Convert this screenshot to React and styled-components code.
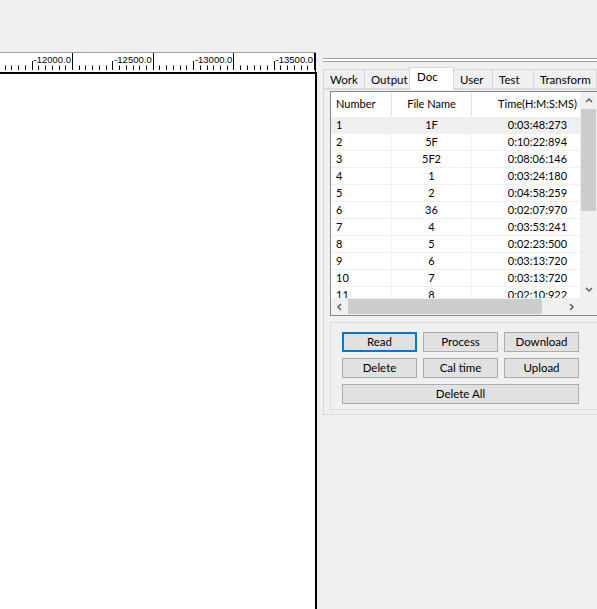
import styled, { createGlobalStyle } from 'styled-components';

const GlobalStyles = createGlobalStyle`
  html, body { margin: 0; padding: 0; }
  body {
    background: #f0f0f0;
    font-family: Lato, "Liberation Sans", sans-serif;
    font-size: 11px;
    color: #000;
  }
`;

const rows = [
  ['1', '1F', '0:03:48:273'],
  ['2', '5F', '0:10:22:894'],
  ['3', '5F2', '0:08:06:146'],
  ['4', '1', '0:03:24:180'],
  ['5', '2', '0:04:58:259'],
  ['6', '36', '0:02:07:970'],
  ['7', '4', '0:03:53:241'],
  ['8', '5', '0:02:23:500'],
  ['9', '6', '0:03:13:720'],
  ['10', '7', '0:03:13:720'],
  ['11', '8', '0:02:10:922'],
];

const tabs = ['Work', 'Output', 'Doc', 'User', 'Test', 'Transform'];
const tabWidths = [42, 46, 45, 40, 42, 64];

function Ruler() {
  const major = [72, 152.7, 233.4, 314.1];
  const labels = ['-12000.0', '-12500.0', '-13000.0', '-13500.0'];
  const step = 80.7 / 12;
  const ticks = [];
  for (let i = -12; i <= 40; i++) {
    const x = Math.round(72 + i * step) + 0.5;
    if (x < 0 || x > 315) continue;
    const m = ((i % 12) + 12) % 12;
    const y1 = m === 0 ? 0 : m === 6 ? 8 : 12.5;
    ticks.push(<line key={i} x1={x} x2={x} y1={y1} y2={17} stroke="#000" strokeWidth="1" />);
  }
  return (
    <RulerSvg width="315" height="19" viewBox="0 0 315 19">
      <rect width="315" height="19" fill="#fff" />
      {ticks}
      {major.map((x, k) => (
        <text key={k} x={x - 1} y="9.5" textAnchor="end" fontSize="9.5" fontFamily="Liberation Sans, sans-serif" fill="#000">
          {labels[k]}
        </text>
      ))}
    </RulerSvg>
  );
}

function Chevron({ dir }) {
  const d = {
    up: 'M1 5 L4 2 L7 5',
    down: 'M1 2 L4 5 L7 2',
    left: 'M5 1 L2 4 L5 7',
    right: 'M2 1 L5 4 L2 7',
  }[dir];
  return (
    <svg width="8" height="8" viewBox="0 0 8 8">
      <path d={d} fill="none" stroke="#606060" strokeWidth="1.5" />
    </svg>
  );
}

function App() {
  return (
    <Page>
      <GlobalStyles />
      <Workspace>
        <TopGap />
        <Ruler />
        <Canvas />
      </Workspace>
      <Side>
        <Grip />
        <TabBar>
          {tabs.map((t, i) => (
            <Tab key={t} $active={t === 'Doc'} $w={tabWidths[i]}>{t}</Tab>
          ))}
        </TabBar>
        <Pane>
          <ListView>
            <ListBody>
              <Table>
                <HeaderRow>
                  <HeadCell $align="left">Number</HeadCell>
                  <HeadCell>File Name</HeadCell>
                  <HeadCell>Time(H:M:S:MS)</HeadCell>
                </HeaderRow>
                {rows.map((r, i) => (
                  <Row key={r[0]} $hl={i === 0}>
                    <Cell $align="left">{r[0]}</Cell>
                    <Cell>{r[1]}</Cell>
                    <Cell>{r[2]}</Cell>
                  </Row>
                ))}
              </Table>
            </ListBody>
            <VScroll>
              <Arrow><Chevron dir="up" /></Arrow>
              <VTrack><VThumb /></VTrack>
              <Arrow><Chevron dir="down" /></Arrow>
            </VScroll>
            <HScroll>
              <Arrow><Chevron dir="left" /></Arrow>
              <HTrack><HThumb /></HTrack>
              <Arrow><Chevron dir="right" /></Arrow>
            </HScroll>
            <Corner />
          </ListView>
          <Group>
            <Button $focus>Read</Button>
            <Button>Process</Button>
            <Button>Download</Button>
            <Button>Delete</Button>
            <Button>Cal time</Button>
            <Button>Upload</Button>
            <Button $span>Delete All</Button>
          </Group>
        </Pane>
      </Side>
    </Page>
  );
}

const Page = styled.div`
  display: flex;
  height: 100vh;
  overflow: hidden;
`;

const Workspace = styled.div`
  width: 316px;
  flex-shrink: 0;
  display: flex;
  flex-direction: column;
`;

const TopGap = styled.div`
  height: 52px;
  border-bottom: 1px solid #a0a0a0;
`;

const RulerSvg = styled.svg`
  display: block;
  border-right: 1px solid #000;
`;

const Canvas = styled.div`
  flex: 1;
  background: #fff;
  border-top: 2px solid #000;
  border-right: 2px solid #000;
  margin-right: -1px;
`;

const Side = styled.div`
  flex: 1;
  padding: 0 0 0 7px;
  display: flex;
  flex-direction: column;
`;

const Grip = styled.div`
  margin-top: 58px;
  height: 2px;
  border-top: 1px solid #a0a0a0;
  border-bottom: 1px solid #a0a0a0;
  background: #fff;
`;

const TabBar = styled.div`
  display: flex;
  align-items: flex-end;
  height: 22px;
  margin-top: 5px;
  position: relative;
  z-index: 1;
`;

const Tab = styled.div`
  width: ${p => p.$w}px;
  flex-shrink: 0;
  box-sizing: border-box;
  height: ${p => (p.$active ? 23 : 20)}px;
  padding: ${p => (p.$active ? '2px 0 0 7px' : '3px 0 0 6px')};
  margin-bottom: ${p => (p.$active ? -1 : 0)}px;
  border: 1px solid #d9d9d9;
  border-bottom: ${p => (p.$active ? 'none' : '1px solid #d9d9d9')};
  background: ${p => (p.$active ? '#fff' : '#f0f0f0')};
  margin-left: -1px;
  &:first-child { margin-left: 0; }
  white-space: nowrap;
  font-size: 11.5px;
`;

const Pane = styled.div`
  height: 326px;
  box-sizing: border-box;
  border: 1px solid #d9d9d9;
  border-right: none;
  padding: 1px 0 0 6px;
  display: flex;
  flex-direction: column;
  gap: 6px;
`;

const ListView = styled.div`
  height: 225px;
  box-sizing: border-box;
  border: 1px solid #828790;
  border-right: none;
  background: #fff;
  display: grid;
  grid-template-columns: 1fr 17px;
  grid-template-rows: 1fr 17px;
`;

const ListBody = styled.div`
  overflow: hidden;
`;

const Table = styled.div`
  width: 272px;
`;

const HeaderRow = styled.div`
  display: grid;
  grid-template-columns: 60px 80px 132px;
  height: 25px;
  align-items: center;
  & > div + div { border-left: 1px solid #e5e5e5; }
`;

const HeadCell = styled.div`
  text-align: ${p => p.$align || 'center'};
  padding-left: ${p => (p.$align === 'left' ? '5px' : '0')};
  height: 100%;
  line-height: 24px;
`;

const Row = styled.div`
  display: grid;
  grid-template-columns: 60px 80px 132px;
  height: 17px;
  line-height: 16px;
  box-sizing: border-box;
  border-bottom: 1px solid #f0f0f0;
  background: ${p => (p.$hl ? '#efefef' : 'transparent')};
  & > div + div { border-left: 1px solid #f0f0f0; }
`;

const Cell = styled.div`
  text-align: ${p => p.$align || 'center'};
  padding-left: ${p => (p.$align === 'left' ? '5px' : '0')};
`;

const VScroll = styled.div`
  background: #f0f0f0;
  display: flex;
  flex-direction: column;
`;

const HScroll = styled.div`
  background: #f0f0f0;
  display: flex;
`;

const Arrow = styled.div`
  width: 17px;
  height: 17px;
  flex-shrink: 0;
  display: flex;
  align-items: center;
  justify-content: center;
`;

const VTrack = styled.div`
  flex: 1;
  padding: 0 1px;
`;

const VThumb = styled.div`
  height: 102px;
  background: #cdcdcd;
`;

const HTrack = styled.div`
  flex: 1;
  padding: 1px 0;
`;

const HThumb = styled.div`
  width: 194px;
  height: 100%;
  background: #cdcdcd;
`;

const Corner = styled.div`
  background: #f0f0f0;
`;

const Group = styled.div`
  height: 88px;
  box-sizing: border-box;
  border: 1px solid #dcdcdc;
  border-right: none;
  padding: 9px 0 0 11px;
  display: grid;
  grid-template-columns: repeat(3, 75px);
  grid-auto-rows: 20px;
  column-gap: 6px;
  row-gap: 6px;
  align-content: start;
`;

const Button = styled.button`
  font: inherit;
  font-size: 11.5px;
  color: #000;
  background: #e1e1e1;
  border: ${p => (p.$focus ? '2px solid #0078d7' : '1px solid #adadad')};
  padding: 0;
  grid-column: ${p => (p.$span ? '1 / 4' : 'auto')};
  line-height: 16px;
`;

export default App;
